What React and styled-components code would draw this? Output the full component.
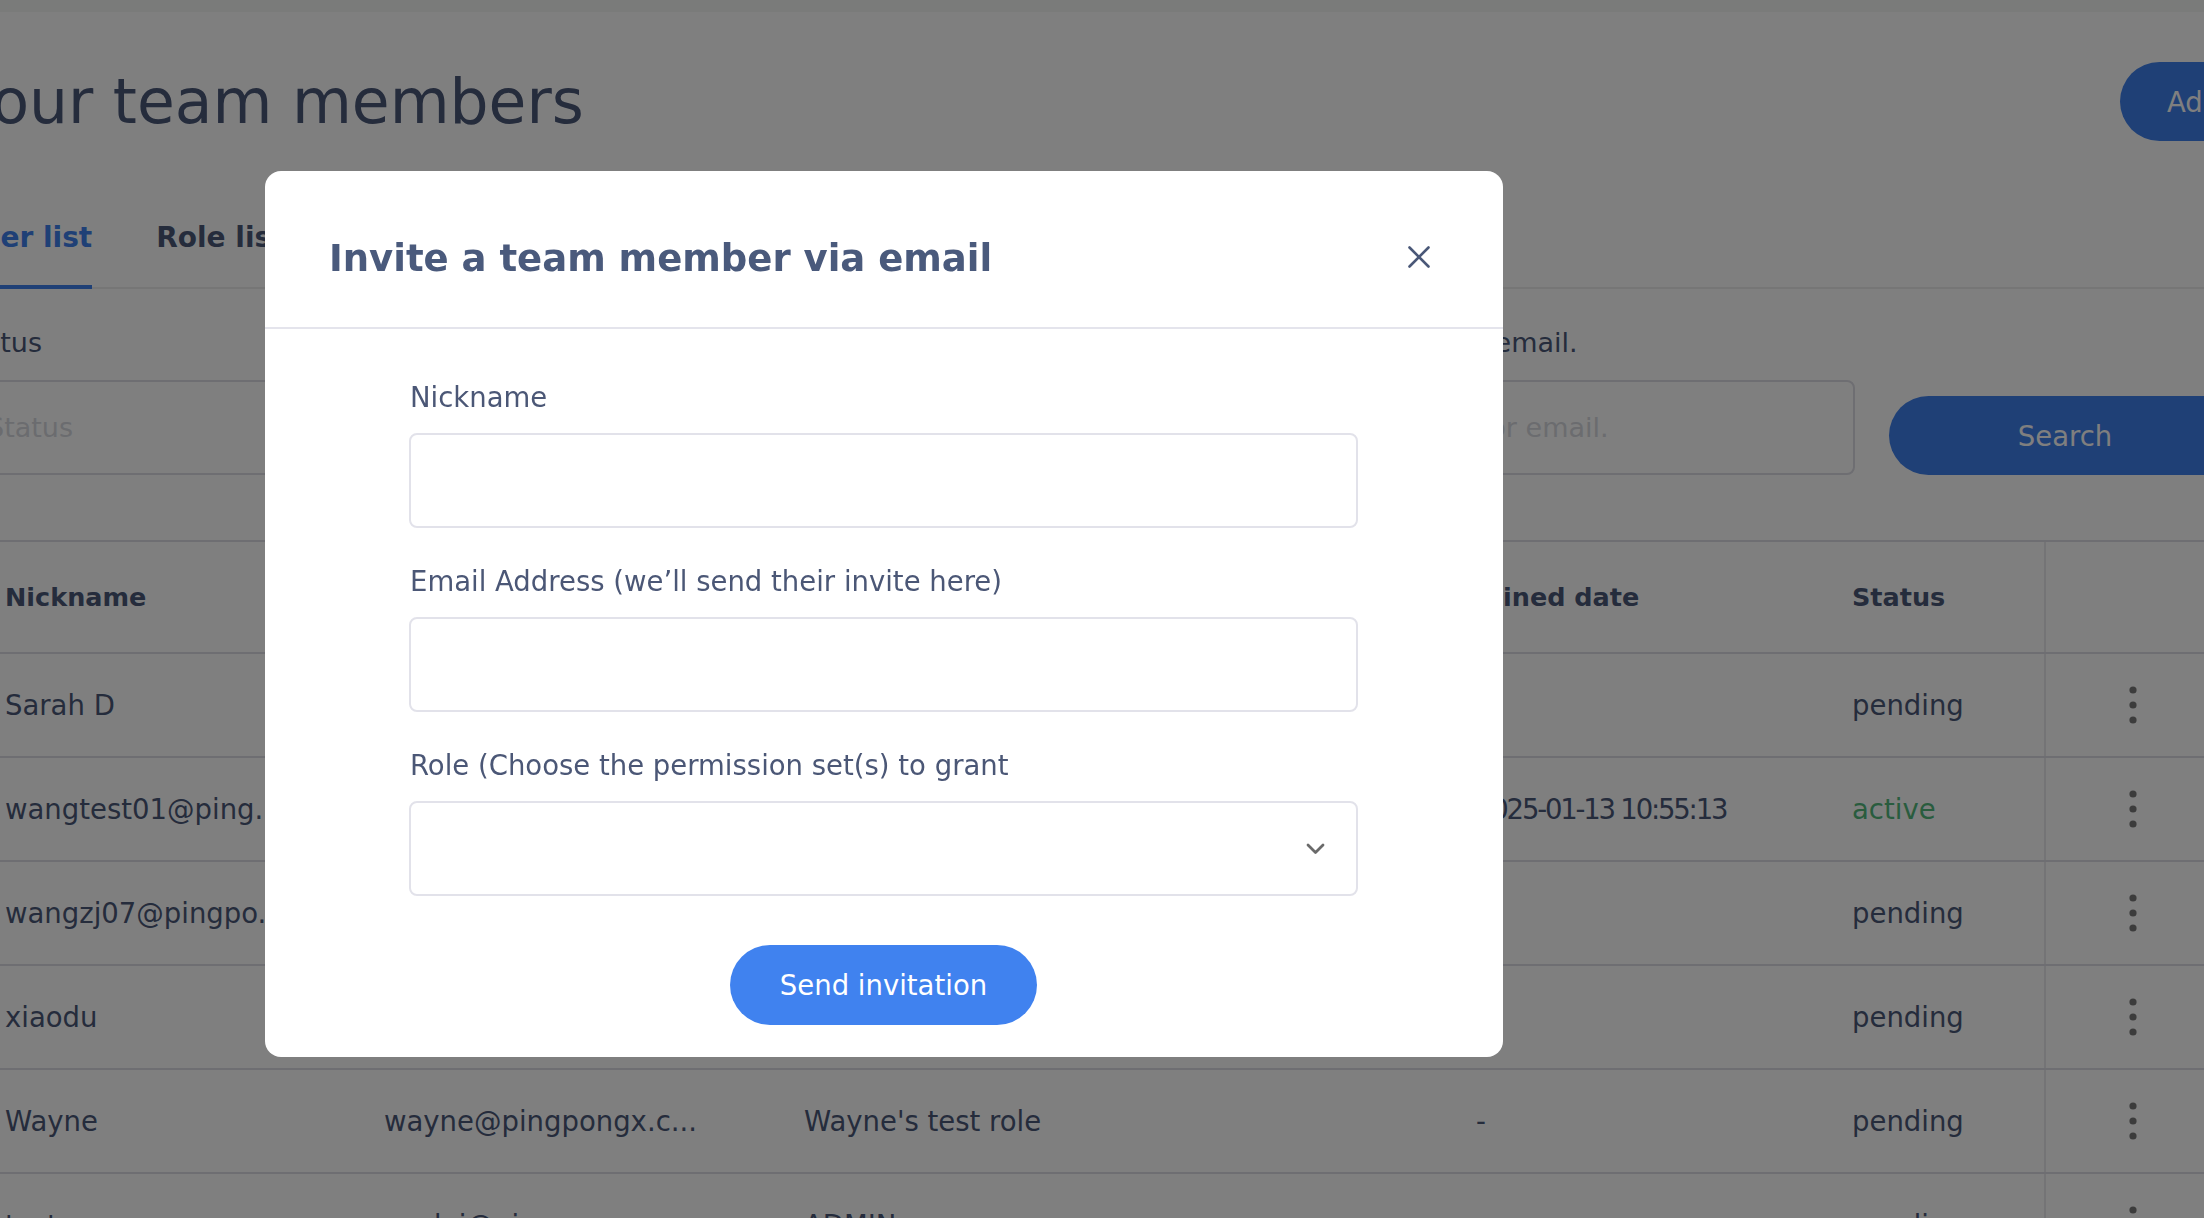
import React from "react";
import styled, { createGlobalStyle } from "styled-components";

const GlobalStyle = createGlobalStyle`
  html, body { margin: 0; padding: 0; background: #ffffff; }
  body {
    width: 2204px;
    height: 1218px;
    overflow: hidden;
    font-family: "DejaVu Sans", "Liberation Sans", sans-serif;
    color: #4b5879;
  }
  * { box-sizing: border-box; }
`;

const TopStrip = styled.div`
  height: 12px;
  background: #f5f7f5;
`;

const Page = styled.div`
  margin-left: -44px;
  width: 2248px;
`;

const HeaderRow = styled.div`
  display: flex;
  align-items: center;
  justify-content: space-between;
  margin-top: 50px;
  height: 79px;
`;

const PageTitle = styled.h1`
  margin: 0;
  padding-left: 6px;
  font-size: 61.5px;
  line-height: 72px;
  font-weight: 400;
  color: #4b5879;
  white-space: nowrap;
`;

const PillButton = styled.button`
  flex-shrink: 0;
  height: 79px;
  width: ${(p) => p.$w}px;
  border: none;
  border-radius: 40px;
  background: #3f80ec;
  color: #ffffff;
  font-family: inherit;
  font-size: 27.5px;
  text-align: ${(p) => (p.$left ? "left" : "center")};
  padding: ${(p) => (p.$left ? "0 0 0 47px" : "0")};
  margin-right: ${(p) => p.$mr || 0}px;
  white-space: nowrap;
`;

const TabBar = styled.div`
  display: flex;
  gap: 64px;
  margin-top: 80px;
  padding-left: 5px;
  border-bottom: 2px solid #ececec;
`;

const Tab = styled.div`
  font-size: 28px;
  line-height: 34px;
  font-weight: 700;
  padding-bottom: 30px;
  margin-bottom: -2px;
  color: ${(p) => (p.$active ? "#3f80ec" : "#4b5879")};
  border-bottom: 4px solid ${(p) => (p.$active ? "#3f80ec" : "transparent")};
  white-space: nowrap;
`;

const FilterRow = styled.div`
  display: flex;
  justify-content: space-between;
  align-items: flex-end;
  padding: 37px 0 65px;
`;

const FilterRight = styled.div`
  display: flex;
  align-items: flex-end;
  gap: 34px;
  margin-right: -37px;
`;

const FilterField = styled.div`
  display: flex;
  flex-direction: column;
  width: ${(p) => p.$w}px;
`;

const FilterLabel = styled.div`
  font-size: 27px;
  line-height: 34px;
  margin-bottom: 20px;
  white-space: nowrap;
`;

const FilterInput = styled.div`
  height: 95px;
  border: 2px solid #dcdce4;
  border-radius: 8px;
  padding-left: 29px;
  display: flex;
  align-items: center;
  font-size: 27px;
  color: #d6d8de;
  white-space: nowrap;
`;

const Table = styled.div`
  border-top: 2px solid #dcdce4;
  width: 2264px;
`;

const Row = styled.div`
  display: grid;
  grid-template-columns: 379px 420px 672px 376px 241px 176px;
  height: ${(p) => (p.$head ? 112 : 104)}px;
  border-bottom: 2px solid #dcdce4;
`;

const Cell = styled.div`
  display: flex;
  align-items: center;
  padding-left: 49px;
  font-size: ${(p) => (p.$head ? 25.5 : 27.5)}px;
  font-weight: ${(p) => (p.$head ? 700 : 400)};
  letter-spacing: ${(p) => p.$ls || 0}px;
  color: ${(p) => p.$color || "#4b5879"};
  white-space: nowrap;
  overflow: hidden;
`;

const ActionCell = styled.div`
  display: flex;
  align-items: center;
  justify-content: center;
  border-left: 2px solid #e8e8ec;
`;

const Overlay = styled.div`
  position: fixed;
  inset: 0;
  background: rgba(0, 0, 0, 0.5);
  display: flex;
  align-items: flex-start;
  padding: 171px 0 0 265px;
`;

const Modal = styled.div`
  width: 1238px;
  background: #ffffff;
  border-radius: 16px;
  overflow: hidden;
`;

const ModalHeader = styled.div`
  display: flex;
  align-items: center;
  justify-content: space-between;
  padding: 66px 73px 46px 64px;
  border-bottom: 2px solid #e4e4ec;
`;

const ModalTitle = styled.h2`
  margin: 0;
  font-size: 37px;
  line-height: 44px;
  font-weight: 700;
  color: #4a5a7c;
  white-space: nowrap;
`;

const CloseButton = styled.button`
  width: 22px;
  height: 22px;
  padding: 0;
  border: none;
  background: none;
  display: flex;
  margin-top: -4px;
`;

const ModalBody = styled.div`
  display: flex;
  flex-direction: column;
  gap: 36px;
  padding: 51px 145px 32px 144px;
`;

const Field = styled.div`
  display: flex;
  flex-direction: column;
`;

const Label = styled.label`
  font-size: 27.5px;
  line-height: 34px;
  color: #4b5776;
  margin-bottom: 19px;
  padding-left: 1px;
  white-space: nowrap;
`;

const TextInput = styled.input`
  height: 95px;
  width: 100%;
  border: 2px solid #e2e2ea;
  border-radius: 8px;
  background: #ffffff;
  font-family: inherit;
  font-size: 27px;
  padding: 0 24px;
  outline: none;
`;

const SelectBox = styled.div`
  height: 95px;
  border: 2px solid #e2e2ea;
  border-radius: 8px;
  display: flex;
  align-items: center;
  justify-content: flex-end;
  padding-right: 31px;
`;

const SubmitRow = styled.div`
  display: flex;
  justify-content: center;
  margin-top: 13px;
`;

const SubmitButton = styled.button`
  width: 307px;
  height: 79.5px;
  border: none;
  border-radius: 40px;
  background: #4082ef;
  color: #ffffff;
  font-family: inherit;
  font-size: 27.5px;
`;

const Dots = () => (
  <svg width="10" height="40" viewBox="0 0 10 40">
    <circle cx="5" cy="5" r="3.6" fill="#787878" />
    <circle cx="5" cy="20" r="3.6" fill="#787878" />
    <circle cx="5" cy="35" r="3.6" fill="#787878" />
  </svg>
);

const rows = [
  ["Sarah D", "sarahd@pingpongx.c...", "ADMIN", "-", "pending"],
  ["wangtest01@ping...", "wangtest01@pingpo...", "Wayne's test role", "2025-01-13 10:55:13", "active"],
  ["wangzj07@pingpo...", "wangzj07@pingpong...", "ADMIN", "-", "pending"],
  ["xiaodu", "xiaodu@pingpongx.c...", "ADMIN", "-", "pending"],
  ["Wayne", "wayne@pingpongx.c...", "Wayne's test role", "-", "pending"],
  ["test", "wudui@pingpongx.c...", "ADMIN", "-", "pending"],
];

export default function App() {
  return (
    <>
      <GlobalStyle />
      <TopStrip />
      <Page>
        <HeaderRow>
          <PageTitle>Your team members</PageTitle>
          <PillButton $w={260} $left $mr={-176}>Add member</PillButton>
        </HeaderRow>
        <TabBar>
          <Tab $active>User list</Tab>
          <Tab>Role list</Tab>
        </TabBar>
        <FilterRow>
          <FilterField $w={540}>
            <FilterLabel>Status</FilterLabel>
            <FilterInput>Status</FilterInput>
          </FilterField>
          <FilterRight>
            <FilterField $w={540}>
              <FilterLabel>Nickname or email.</FilterLabel>
              <FilterInput>Nickname or email.</FilterInput>
            </FilterField>
            <PillButton $w={352}>Search</PillButton>
          </FilterRight>
        </FilterRow>
        <Table>
          <Row $head>
            <Cell $head>Nickname</Cell>
            <Cell $head>Email</Cell>
            <Cell $head>Role</Cell>
            <Cell $head>Joined date</Cell>
            <Cell $head>Status</Cell>
            <ActionCell />
          </Row>
          {rows.map((r, i) => (
            <Row key={i}>
              <Cell>{r[0]}</Cell>
              <Cell>{r[1]}</Cell>
              <Cell>{r[2]}</Cell>
              <Cell $ls={r[3].length > 1 ? -2.2 : 0}>{r[3]}</Cell>
              <Cell $color={r[4] === "active" ? "#52b97c" : undefined}>{r[4]}</Cell>
              <ActionCell>
                <Dots />
              </ActionCell>
            </Row>
          ))}
        </Table>
      </Page>
      <Overlay>
        <Modal>
          <ModalHeader>
            <ModalTitle>Invite a team member via email</ModalTitle>
            <CloseButton aria-label="Close">
              <svg width="22" height="22" viewBox="0 0 22 22">
                <path d="M1.5 1.5 L20.5 20.5 M20.5 1.5 L1.5 20.5" stroke="#4a5878" strokeWidth="2.6" strokeLinecap="round" />
              </svg>
            </CloseButton>
          </ModalHeader>
          <ModalBody>
            <Field>
              <Label>Nickname</Label>
              <TextInput />
            </Field>
            <Field>
              <Label>Email Address (we’ll send their invite here)</Label>
              <TextInput />
            </Field>
            <Field>
              <Label>Role (Choose the permission set(s) to grant</Label>
              <SelectBox>
                <svg width="19" height="12" viewBox="0 0 19 12">
                  <path d="M2 2 L9.5 9.5 L17 2" fill="none" stroke="#6a6a6a" strokeWidth="2.8" strokeLinecap="round" strokeLinejoin="round" />
                </svg>
              </SelectBox>
            </Field>
            <SubmitRow>
              <SubmitButton>Send invitation</SubmitButton>
            </SubmitRow>
          </ModalBody>
        </Modal>
      </Overlay>
    </>
  );
}
